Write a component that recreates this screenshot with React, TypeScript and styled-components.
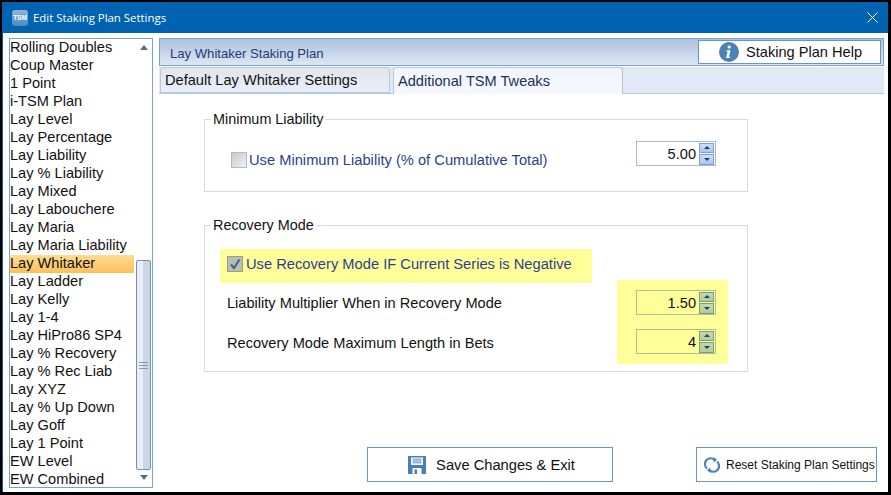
import React from "react";
import styled, { createGlobalStyle } from "styled-components";

const GlobalStyle = createGlobalStyle`
  html, body {
    margin: 0;
    padding: 0;
    background: #000;
  }
  * {
    box-sizing: border-box;
  }
`;

const Frame = styled.div`
  width: 891px;
  height: 495px;
  padding: 2px 3px 3px 2px;
  background: #000;
  font-family: "Liberation Sans", Arial, sans-serif;
  font-size: 14.6px;
  color: #111;
  overflow: hidden;
`;

const Window = styled.div`
  height: 100%;
  display: flex;
  flex-direction: column;
  background: #fff;
  border-left: 1px solid #0063b1;
`;

const TitleBar = styled.div`
  height: 31px;
  flex: none;
  display: flex;
  align-items: center;
  padding: 0 10px 0 9px;
  background: #0063b1;
  color: #fff;
`;

const AppIcon = styled.div`
  width: 16px;
  height: 16px;
  border-radius: 3px;
  background: linear-gradient(#8db6d8, #4a8abd);
  color: #fff;
  font-size: 6.5px;
  font-weight: bold;
  line-height: 16px;
  text-align: center;
`;

const TitleText = styled.span`
  margin-left: 5px;
  flex: 1;
  font-family: "Open Sans", sans-serif;
  font-size: 11.4px;
`;

const Body = styled.div`
  flex: 1;
  min-height: 0;
  display: flex;
  padding: 5px 4px 4px 6px;
`;

const ListBox = styled.div`
  width: 144px;
  flex: none;
  display: flex;
  border: 1px solid #7aa2d8;
`;

const Items = styled.div`
  flex: 1;
  padding-right: 1px;
`;

const Item = styled.div<{ $selected?: boolean }>`
  height: 18px;
  line-height: 17px;
  white-space: nowrap;
  background: ${(p) => (p.$selected ? "linear-gradient(#fedc91, #fbc05c)" : "none")};
`;

const ScrollBar = styled.div`
  width: 17px;
  flex: none;
  display: flex;
  flex-direction: column;
  align-items: center;
  background: #fff;
`;

const ScrollArrow = styled.div<{ $down?: boolean }>`
  width: 0;
  height: 0;
  margin: ${(p) => (p.$down ? "auto 0 7px" : "6px 0 0")};
  border-left: 4.5px solid transparent;
  border-right: 4.5px solid transparent;
  ${(p) => (p.$down ? "border-top: 5px solid #5b6b88;" : "border-bottom: 5px solid #5b6b88;")}
`;

const ScrollThumb = styled.div`
  width: 15px;
  height: 210px;
  margin-top: 210px;
  display: flex;
  align-items: center;
  justify-content: center;
  border: 1px solid #6f8fbd;
  border-radius: 2px;
  background: linear-gradient(90deg, #e9edf4 0 50%, #ccd7e4 50% 100%);
`;

const Grip = styled.div`
  width: 9px;
  height: 7px;
  border-top: 1px solid #8a97a8;
  border-bottom: 1px solid #8a97a8;
  background: linear-gradient(#8a97a8, #8a97a8) center / 100% 1px no-repeat;
`;

const Main = styled.div`
  flex: 1;
  min-width: 0;
  margin: 0 0 6px 6px;
  display: flex;
  flex-direction: column;
`;

const PlanHeader = styled.div`
  height: 28px;
  flex: none;
  display: flex;
  align-items: center;
  justify-content: space-between;
  padding: 0 2px 0 10px;
  border: 1px solid #7ba0d4;
  background: linear-gradient(#adc2dc, #dde7f3);
`;

const PlanTitle = styled.span`
  font-size: 13.1px;
  color: #23397a;
  padding-top: 3px;
`;

const HelpButton = styled.button`
  width: 183px;
  height: 24px;
  display: flex;
  align-items: center;
  justify-content: center;
  gap: 7px;
  padding: 0 0 0 2px;
  border: 1px solid #6a94c8;
  background: #fff;
  color: #111;
  font: inherit;
  font-size: 14.6px;
`;

const TabStrip = styled.div`
  height: 27px;
  flex: none;
  margin-top: 1px;
  display: flex;
  align-items: flex-end;
  gap: 3px;
  padding-left: 1px;
  background: #e1e9f5;
  border-bottom: 1px solid #b4c8e2;
`;

const Tab = styled.div<{ $active?: boolean }>`
  width: 230px;
  height: ${(p) => (p.$active ? "27px" : "26px")};
  margin-bottom: ${(p) => (p.$active ? "-1px" : "0")};
  padding: ${(p) => (p.$active ? "5px 0 0 4px" : "4px 0 0 4px")};
  border: 1px solid #b4c8e2;
  border-bottom: ${(p) => (p.$active ? "none" : "1px solid #b4c8e2")};
  border-radius: 3px 3px 0 0;
  background: ${(p) =>
    p.$active ? "linear-gradient(#f0f5fd, #f5f9ff)" : "linear-gradient(#e2e5ea, #e8eff9)"};
  color: ${(p) => (p.$active ? "#1c2f55" : "#111")};
`;

const TabBody = styled.div`
  flex: 1;
  display: flex;
  flex-direction: column;
  padding: 25px 0 0 45px;
`;

const Group = styled.div<{ $height: number }>`
  position: relative;
  width: 544px;
  height: ${(p) => p.$height}px;
  margin-bottom: 33px;
  border: 1px solid #d9d9d9;
`;

const Legend = styled.span`
  position: absolute;
  top: -9px;
  left: 6px;
  padding: 0 2px;
  background: #fff;
  font-size: 14.4px;
  line-height: 16px;
`;

const MinRow = styled.div`
  display: flex;
  align-items: flex-start;
  justify-content: space-between;
  padding: 21px 31px 0 26px;
`;

const CheckRow = styled.div`
  display: flex;
  align-items: center;
  gap: 3px;
`;

const MinCheckRow = styled(CheckRow)`
  margin-top: 11px;
  height: 16px;
  gap: 2px;
`;

const CheckBox = styled.span<{ $checked?: boolean }>`
  width: 16px;
  height: 16px;
  flex: none;
  display: flex;
  align-items: center;
  justify-content: center;
  border: 1px solid ${(p) => (p.$checked ? "#8f9f97" : "#a9bcd8")};
  background: ${(p) => (p.$checked ? "#b9c0a6" : "linear-gradient(135deg, #c8c8c8, #f1f1f1)")};
`;

const BlueLabel = styled.span`
  font-size: 14.7px;
  color: #2c3f8c;
`;

const RecoveryRow = styled.div`
  display: flex;
  padding: 23px 0 0 15px;
`;

const RecoveryLeft = styled.div`
  width: 372px;
  flex: none;
`;

const HighlightRow = styled(CheckRow)`
  height: 34px;
  padding-left: 7px;
  padding-bottom: 5px;
  background: #ffff99;
`;

const PlainLabel = styled.div`
  height: 20px;
  line-height: 20px;
  margin: 10px 0 20px 7px;
`;

const HighlightBlock = styled.div`
  width: 111px;
  height: 84px;
  margin: 31px 0 0 25px;
  padding: 10px 12px 0 19px;
  display: flex;
  flex-direction: column;
  gap: 14px;
  background: #ffff99;
`;

const Spinner = styled.div<{ $highlight?: boolean }>`
  width: 80px;
  height: 25px;
  flex: none;
  display: flex;
  align-items: center;
  justify-content: flex-end;
  padding-right: 1px;
  border: 1px solid ${(p) => (p.$highlight ? "#a9bf9f" : "#a6b9d6")};
`;

const SpinValue = styled.span`
  margin-right: 3px;
  font-size: 14.6px;
`;

const SpinButtons = styled.div`
  width: 15px;
  height: 22px;
  display: flex;
  flex-direction: column;
  gap: 1px;
`;

const SpinButton = styled.div<{ $highlight?: boolean; $down?: boolean }>`
  flex: 1;
  display: flex;
  align-items: center;
  justify-content: center;
  border: 1px solid ${(p) => (p.$highlight ? "#7f9a84" : "#7f9fca")};
  background: ${(p) =>
    p.$highlight ? "linear-gradient(#c6d9a4, #b3cd98)" : "linear-gradient(#cfe0f7, #a9c6ee)"};

  &::after {
    content: "";
    border-left: 3px solid transparent;
    border-right: 3px solid transparent;
    ${(p) => (p.$down ? "border-top: 3px solid #1d3f80;" : "border-bottom: 3px solid #1d3f80;")}
  }
`;

const Footer = styled.div`
  margin-top: auto;
  display: flex;
  justify-content: flex-end;
  gap: 83px;
  padding-right: 7px;
`;

const FooterButton = styled.button<{ $small?: boolean }>`
  width: ${(p) => (p.$small ? "181px" : "246px")};
  height: 35px;
  display: flex;
  align-items: center;
  justify-content: ${(p) => (p.$small ? "flex-start" : "center")};
  gap: ${(p) => (p.$small ? "6px" : "10px")};
  padding: ${(p) => (p.$small ? "0 0 0 7px" : "0 0 0 3px")};
  border: 1px solid #6a94c8;
  background: #fff;
  color: #111;
  font: inherit;
  font-size: ${(p) => (p.$small ? "12px" : "14.7px")};
  white-space: nowrap;
`;

const plans = [
  "Rolling Doubles",
  "Coup Master",
  "1 Point",
  "i-TSM Plan",
  "Lay Level",
  "Lay Percentage",
  "Lay Liability",
  "Lay % Liability",
  "Lay Mixed",
  "Lay Labouchere",
  "Lay Maria",
  "Lay Maria Liability",
  "Lay Whitaker",
  "Lay Ladder",
  "Lay Kelly",
  "Lay 1-4",
  "Lay HiPro86 SP4",
  "Lay % Recovery",
  "Lay % Rec Liab",
  "Lay XYZ",
  "Lay % Up Down",
  "Lay Goff",
  "Lay 1 Point",
  "EW Level",
  "EW Combined",
];

function CloseIcon() {
  return (
    <svg width="11" height="11" viewBox="0 0 11 11">
      <path d="M0.5 0.5L10.5 10.5M10.5 0.5L0.5 10.5" stroke="#fff" strokeWidth="1" fill="none" />
    </svg>
  );
}

function InfoIcon() {
  return (
    <svg width="20" height="20" viewBox="0 0 20 20">
      <circle cx="10" cy="10" r="10" fill="#4a82b5" />
      <path d="M10.2 3.4a1.6 1.6 0 1 1 -0.1 3.2a1.6 1.6 0 0 1 0.1 -3.2z" fill="#fff" />
      <path d="M7.6 8.2h4l-1.7 6.6h1.4l-0.3 1.2H7l1.7-6.6H7.3z" fill="#fff" />
    </svg>
  );
}

function SaveIcon() {
  return (
    <svg width="18" height="18" viewBox="0 0 18 18">
      <path d="M0 0h18v18H0z" fill="#4a7fb5" />
      <path d="M3 1.5h12v7.5H3z" fill="#fff" />
      <path d="M4.5 3.2h9M4.5 5h9M4.5 6.8h9" stroke="#4a7fb5" strokeWidth="0.9" />
      <path d="M4.5 12h9v6h-9z" fill="#fff" />
      <path d="M6.5 13.5h2.5v4.5H6.5z" fill="#4a7fb5" />
    </svg>
  );
}

function ResetIcon() {
  return (
    <svg width="16" height="16" viewBox="0 0 16 16" fill="none">
      <path d="M3 11.5A5.8 5.8 0 0 1 10.5 2.6" stroke="#4a84bd" strokeWidth="2.2" />
      <path d="M9 0.2l4.2 2.2-3.2 3.2z" fill="#4a84bd" />
      <path d="M13 4.5A5.8 5.8 0 0 1 5.5 13.4" stroke="#4a84bd" strokeWidth="2.2" />
      <path d="M7 15.8l-4.2-2.2 3.2-3.2z" fill="#4a84bd" />
    </svg>
  );
}

function TickIcon() {
  return (
    <svg width="12" height="12" viewBox="0 0 12 12">
      <path d="M2 6.5L5 10L10.5 1.5" stroke="#3d5da8" strokeWidth="2" fill="none" />
    </svg>
  );
}

function SpinBox({ value, highlight }: { value: string; highlight?: boolean }) {
  return (
    <Spinner $highlight={highlight}>
      <SpinValue>{value}</SpinValue>
      <SpinButtons>
        <SpinButton $highlight={highlight} />
        <SpinButton $highlight={highlight} $down />
      </SpinButtons>
    </Spinner>
  );
}

export default function App() {
  return (
    <>
      <GlobalStyle />
      <Frame>
        <Window>
          <TitleBar>
            <AppIcon>TSM</AppIcon>
            <TitleText>Edit Staking Plan Settings</TitleText>
            <CloseIcon />
          </TitleBar>
          <Body>
            <ListBox>
              <Items>
                {plans.map((plan) => (
                  <Item key={plan} $selected={plan === "Lay Whitaker"}>
                    {plan}
                  </Item>
                ))}
              </Items>
              <ScrollBar>
                <ScrollArrow />
                <ScrollThumb>
                  <Grip />
                </ScrollThumb>
                <ScrollArrow $down />
              </ScrollBar>
            </ListBox>
            <Main>
              <PlanHeader>
                <PlanTitle>Lay Whitaker Staking Plan</PlanTitle>
                <HelpButton>
                  <InfoIcon />
                  Staking Plan Help
                </HelpButton>
              </PlanHeader>
              <TabStrip>
                <Tab>Default Lay Whitaker Settings</Tab>
                <Tab $active>Additional TSM Tweaks</Tab>
              </TabStrip>
              <TabBody>
                <Group $height={73}>
                  <Legend>Minimum Liability</Legend>
                  <MinRow>
                    <MinCheckRow>
                      <CheckBox />
                      <BlueLabel>Use Minimum Liability (% of Cumulative Total)</BlueLabel>
                    </MinCheckRow>
                    <SpinBox value="5.00" />
                  </MinRow>
                </Group>
                <Group $height={147}>
                  <Legend>Recovery Mode</Legend>
                  <RecoveryRow>
                    <RecoveryLeft>
                      <HighlightRow>
                        <CheckBox $checked>
                          <TickIcon />
                        </CheckBox>
                        <BlueLabel>Use Recovery Mode IF Current Series is Negative</BlueLabel>
                      </HighlightRow>
                      <PlainLabel>Liability Multiplier When in Recovery Mode</PlainLabel>
                      <PlainLabel>Recovery Mode Maximum Length in Bets</PlainLabel>
                    </RecoveryLeft>
                    <HighlightBlock>
                      <SpinBox value="1.50" highlight />
                      <SpinBox value="4" highlight />
                    </HighlightBlock>
                  </RecoveryRow>
                </Group>
                <Footer>
                  <FooterButton>
                    <SaveIcon />
                    Save Changes &amp; Exit
                  </FooterButton>
                  <FooterButton $small>
                    <ResetIcon />
                    Reset Staking Plan Settings
                  </FooterButton>
                </Footer>
              </TabBody>
            </Main>
          </Body>
        </Window>
      </Frame>
    </>
  );
}
